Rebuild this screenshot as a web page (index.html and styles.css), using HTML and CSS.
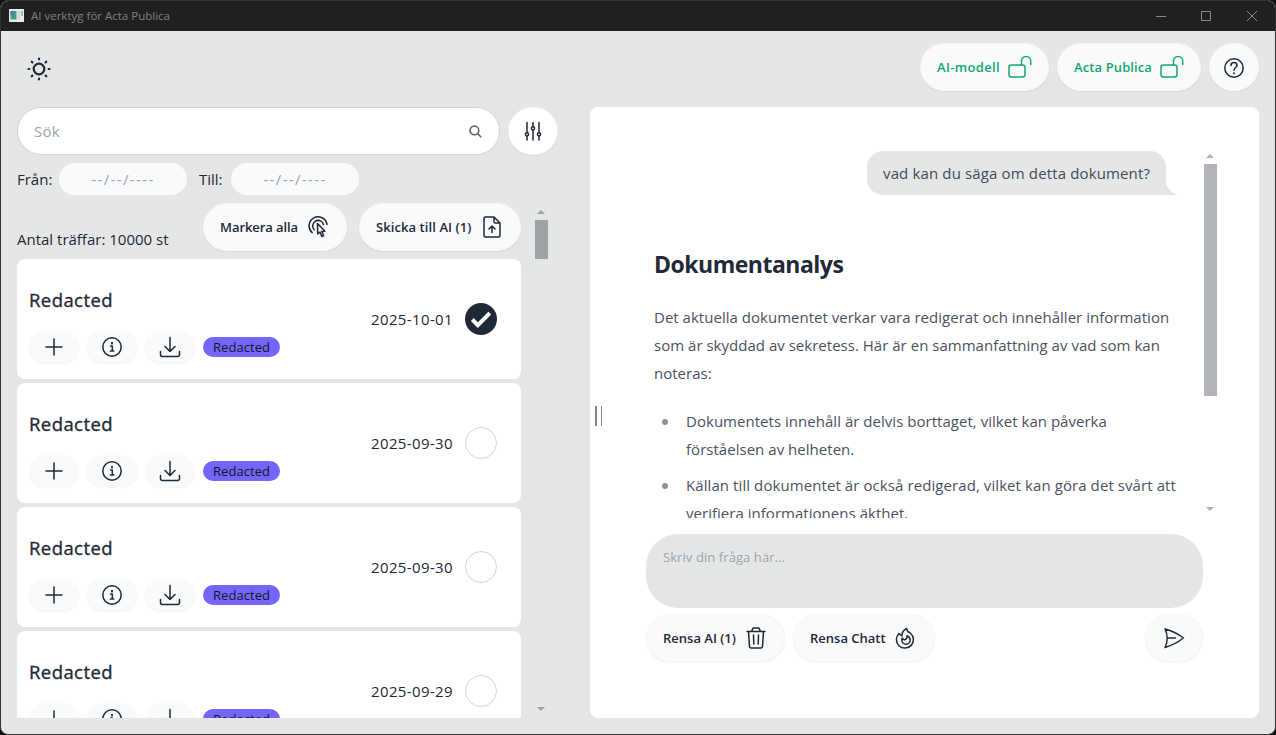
FILE: index.html
```
<!DOCTYPE html>
<html lang="sv">
<head>
<meta charset="utf-8">
<title>AI verktyg för Acta Publica</title>
<link rel="stylesheet" href="styles.css">
</head>
<body>
<svg class="defs" width="0" height="0">
  <symbol id="i-plus" viewBox="0 0 24 24"><path d="M12 4v16M4 12h16"/></symbol>
  <symbol id="i-info" viewBox="0 0 24 24"><circle cx="12" cy="12" r="9.2"/><path d="M10.6 11h1.7v5M10.4 16h3.4" /><path d="M12 7.600v1.100" stroke-width="1.8"/></symbol>
  <symbol id="i-down" viewBox="0 0 24 24"><path d="M12 2.500v14M7 11.500l5 5 5-5M2.500 16.500v3q0 2 2 2h15q2 0 2-2v-3"/></symbol>
  <symbol id="i-lock" viewBox="0 0 24 24"><rect x="1" y="10" width="16" height="12" rx="2.500"/><path d="M13.500 10V6a4.600 4.600 0 0 1 9.200 0v3.500"/></symbol>
</svg>
<div class="window">
  <header class="titlebar">
    <svg class="app-icon" width="15" height="13" viewBox="0 0 15 13"><rect width="15" height="13" fill="#e8eaea"/><rect x="1.500" y="2" width="6" height="8.500" fill="#4c9a8e"/><rect x="1.500" y="2" width="3" height="4" fill="#497f9f"/><rect x="8.500" y="2" width="2.500" height="8.500" fill="#d3d8da"/><rect x="12" y="2" width="2" height="5" fill="#8cc2b4"/></svg>
    <span class="app-title">AI verktyg för Acta Publica</span>
    <svg class="win-controls" width="104" height="12" viewBox="0 0 104 12"><path d="M1 6.500h10M46.500 1.500h9v9h-9zM92 1l10 10M102 1L92 11"/></svg>
  </header>
  <div class="toolbar">
    <svg class="sun" width="26" height="26" viewBox="0 0 26 26"><circle cx="13" cy="13" r="5.300"/><path d="M13 2.500v.8M13 22.700v.8M2.500 13h.8M22.700 13h.8M5.700 5.700l.7.7M19.600 19.600l.7.7M5.700 20.300l.7-.7M19.600 6.400l.7-.7"/></svg>
    <button class="btn green ai"><span>AI-modell</span><svg class="ic"><use href="#i-lock"/></svg></button>
    <button class="btn green acta"><span>Acta Publica</span><svg class="ic"><use href="#i-lock"/></svg></button>
    <button class="btn round help"><svg class="ic" viewBox="0 0 24 24"><circle cx="12" cy="12" r="9.200"/><path d="M9 9.600q0-3 3-3t3 2.800c0 2.100-3 2.200-3 4.800v.1"/><path d="M12 17v.6" stroke-width="1.600"/></svg></button>
  </div>
  <main class="content">
    <section class="left">
      <div class="search-row">
        <div class="search"><span>Sök</span><svg width="13" height="13" viewBox="0 0 14 14"><circle cx="5.800" cy="5.800" r="4.700"/><path d="M9.200 9.200l4 4"/></svg></div>
        <button class="btn round white"><svg class="ic" viewBox="0 0 24 24"><path d="M6 3.500v10M6 17v4M12 3.500v4M12 11v10M18 3.500v10M18 17v4"/><circle cx="6" cy="15.300" r="1.600"/><circle cx="12" cy="9.300" r="1.600"/><circle cx="18" cy="15.300" r="1.600"/></svg></button>
      </div>
      <div class="date-row">
        <label class="from">Från:</label><span class="date-input">--/--/----</span>
        <label class="to">Till:</label><span class="date-input">--/--/----</span>
      </div>
      <div class="scroll-row">
        <div class="results">
          <div class="actions">
            <span class="count">Antal träffar: 10000 st</span>
            <button class="btn mark"><span>Markera alla</span><svg class="ic" viewBox="0 0 24 24"><path d="M6.200 17.600A9 9 0 1 1 21 9.500M8.200 14.700A5.500 5.500 0 1 1 17.500 9.500M11.500 8.500l.2 10.500 2.300-2 1.800 4.500 1.800-.8-1.700-4.200 3-.2z"/></svg></button>
            <button class="btn send-ai"><span>Skicka till AI (1)</span><svg class="ic" viewBox="0 0 24 24"><path d="M14 2H5.500Q4 2 4 3.500v17Q4 22 5.500 22h13q1.500 0 1.500-1.500V8zM14 2v4.500Q14 8 15.500 8H20M12 17.500v-6M9 14l3-3 3 3"/></svg></button>
          </div>
          <article class="card"><div class="info"><h3>Redacted</h3><div class="tools"><button class="tool"><svg class="ic"><use href="#i-plus"/></svg></button><button class="tool"><svg class="ic"><use href="#i-info"/></svg></button><button class="tool"><svg class="ic"><use href="#i-down"/></svg></button><span class="badge">Redacted</span></div></div><time>2025-10-01</time><span class="check on"><svg width="32" height="32" viewBox="0 0 32 32"><path d="M7.300 16.500l5.600 5.600L24.800 10.200"/></svg></span></article>
          <article class="card"><div class="info"><h3>Redacted</h3><div class="tools"><button class="tool"><svg class="ic"><use href="#i-plus"/></svg></button><button class="tool"><svg class="ic"><use href="#i-info"/></svg></button><button class="tool"><svg class="ic"><use href="#i-down"/></svg></button><span class="badge">Redacted</span></div></div><time>2025-09-30</time><span class="check"></span></article>
          <article class="card"><div class="info"><h3>Redacted</h3><div class="tools"><button class="tool"><svg class="ic"><use href="#i-plus"/></svg></button><button class="tool"><svg class="ic"><use href="#i-info"/></svg></button><button class="tool"><svg class="ic"><use href="#i-down"/></svg></button><span class="badge">Redacted</span></div></div><time>2025-09-30</time><span class="check"></span></article>
          <article class="card"><div class="info"><h3>Redacted</h3><div class="tools"><button class="tool"><svg class="ic"><use href="#i-plus"/></svg></button><button class="tool"><svg class="ic"><use href="#i-info"/></svg></button><button class="tool"><svg class="ic"><use href="#i-down"/></svg></button><span class="badge">Redacted</span></div></div><time>2025-09-29</time><span class="check"></span></article>
        </div>
        <div class="bar list-bar"><i class="up"></i><i class="thumb"></i><i class="down"></i></div>
      </div>
    </section>
    <section class="chat">
      <div class="grip"><i></i><i></i></div>
      <div class="chat-body">
        <div class="log-row">
          <div class="log">
            <div class="bubble">vad kan du säga om detta dokument?<svg class="tail" width="12" height="11" viewBox="0 0 12 11"><path d="M0 0Q4 9 12 11H0z"/></svg></div>
            <h2>Dokumentanalys</h2>
            <p>Det aktuella dokumentet verkar vara redigerat och innehåller information<br>som är skyddad av sekretess. Här är en sammanfattning av vad som kan<br>noteras:</p>
            <ul>
              <li>Dokumentets innehåll är delvis borttaget, vilket kan påverka<br>förståelsen av helheten.</li>
              <li><span class="wide">Källan till dokumentet är också redigerad, vilket kan göra det svårt att</span><br>verifiera informationens äkthet.</li>
            </ul>
          </div>
          <div class="bar chat-bar"><i class="up"></i><i class="thumb"></i><i class="down"></i></div>
        </div>
        <div class="prompt">Skriv din fråga här...</div>
        <div class="chat-actions">
          <button class="btn clear-ai"><span>Rensa AI (1)</span><svg class="ic" viewBox="0 0 24 24"><path d="M3 5.500h18M4.500 5.500l1 15q.1 1.500 1.600 1.500h9.800q1.500 0 1.600-1.500l1-15M8 5.500q0-3.500 2-3.500h4q2 0 2 3.500M9.500 9l.3 9M14.500 9l-.3 9"/></svg></button>
          <button class="btn clear-chat"><span>Rensa Chatt</span><svg class="ic" viewBox="0 0 24 24"><path d="M12.500 2.300Q13 5.500 16.500 7.200A8.500 8.500 0 1 1 5 7.500L8 10Q7.500 5.500 12.500 2.300z"/><path d="M13 9.800Q16.200 11 16.200 14a4.200 4.200 0 1 1-8.400 0q0-1 .5-1.800 1.400 2 3 1.300 2-1 1.700-3.700z"/></svg></button>
          <button class="btn send"><svg class="ic" viewBox="0 0 24 24"><path d="M3 3Q13 5.500 21.500 12 13 18.500 3 21.500 7.500 12 3 3zM5.500 12h8"/></svg></button>
        </div>
      </div>
    </section>
  </main>
</div>
</body>
</html>
```
FILE: styles.css
```
* { box-sizing: border-box; }
body { margin: 0; background: #111; font-family: "Open Sans", "Noto Sans", sans-serif; font-size: 15px; color: #1f2937; }
.defs { position: absolute; }
.window { width: 1276px; height: 735px; border: 1px solid #333; border-radius: 8px; background: #e5e7e6; overflow: hidden; display: flex; flex-direction: column; }
.titlebar { height: 30px; flex: none; background: #202020; display: flex; align-items: center; padding: 0 16px 1px 8px; color: #808080; font-size: 11.5px; }
.app-title { margin-left: 7px; flex: none; }
.win-controls { margin-left: auto; fill: none; stroke: #8a8a8a; }
.toolbar { height: 76px; flex: none; display: flex; align-items: flex-start; gap: 8px; padding: 12px 16px 0 25px; }
.sun { margin: 13px auto 0 0; fill: none; stroke: #1f2937; stroke-width: 2.2; stroke-linecap: round; }
.ic { width: 24px; height: 24px; fill: none; stroke: currentColor; stroke-width: 1.5; stroke-linecap: round; stroke-linejoin: round; flex: none; }
.btn { height: 48px; border: 1px solid #f5f6f8; border-radius: 24px; background: #f9fafc; box-shadow: 0 1px 2px rgba(0,0,0,.05); color: #1f2937; font: 600 13px "Open Sans", sans-serif; display: flex; align-items: center; justify-content: space-between; padding: 0 16px; white-space: nowrap; flex: none; }
.green { color: #10a870; }
.ai { width: 129px; letter-spacing: .34px; }
.acta { width: 144px; letter-spacing: .11px; }
.round { width: 50px; padding: 0; justify-content: center; }
.help { padding-top: 1px; }
.white { background: #fff; }
.content { flex: 1; display: flex; min-height: 0; padding: 0 16px 16px; }
.left { width: 541px; display: flex; flex-direction: column; gap: 8px; }
.search-row { display: flex; gap: 8px; }
.search { width: 483px; height: 48px; border: 1px solid #d2d4d4; border-radius: 24px; background: #fff; display: flex; align-items: center; justify-content: space-between; padding: 0 17px 0 16px; color: #9ca3af; letter-spacing: .3px; }
.search svg { fill: none; stroke: #5d646f; stroke-width: 1.7; }
.date-row { height: 32px; display: flex; align-items: center; gap: 8px; white-space: nowrap; }
.from { width: 34px; }
.to { width: 24px; margin-left: 4px; }
.date-input { width: 128px; height: 32px; border-radius: 16px; background: #f9fafc; color: #9ca3af; display: flex; align-items: center; justify-content: center; letter-spacing: 1.35px; }
.scroll-row { flex: 1; min-height: 0; display: flex; gap: 14px; }
.results { width: 504px; overflow: hidden; display: flex; flex-direction: column; gap: 4px; }
.actions { height: 52px; flex: none; display: flex; gap: 12px; }
.count { width: 174px; height: 46px; display: flex; align-items: flex-end; white-space: nowrap; }
.mark { width: 144px; letter-spacing: -.07px; }
.send-ai { width: 162px; letter-spacing: .08px; }
.card { height: 120px; flex: none; background: #fff; border-radius: 8px; padding: 27px 24px 0 12px; display: flex; align-items: flex-start; }
.info { flex: 1; }
h3 { margin: 0; font-size: 18.5px; font-weight: 400; line-height: 28px; letter-spacing: .43px; -webkit-text-stroke: .35px; }
.tools { display: flex; align-items: center; gap: 8px; margin-top: 17px; }
.tool { width: 50px; height: 32px; border: 0; border-radius: 16px; padding: 0; background: #f9fafc; box-shadow: 0 1px 2px rgba(0,0,0,.05); color: #1f2937; display: flex; align-items: center; justify-content: center; }
.badge { height: 20px; width: 77px; line-height: 20px; border-radius: 10px; background: #7566fb; color: #111827; font-size: 13px; text-align: center; letter-spacing: .05px; }
time { margin: 22px 12px 0 0; line-height: 22px; width: 82px; letter-spacing: .37px; }
.check { width: 32px; height: 32px; margin-top: 17px; border: 1px solid #d4d5d6; border-radius: 50%; }
.on { border: 0; background: #1f2937; }
.on svg { fill: none; stroke: #fff; stroke-width: 4; display: block; }
.bar { display: flex; flex-direction: column; align-items: flex-start; width: 13px; color: #9da2a5; }
.up, .down { margin-left: 2px; border: 4px solid transparent; }
.up { border-top: 0; border-bottom-color: currentColor; }
.down { border-bottom: 0; border-top-color: currentColor; margin-top: auto; }
.thumb { width: 13px; background: currentColor; margin-top: 6px; }
.list-bar { padding: 7px 0; }
.list-bar .thumb { height: 39px; }
.chat { margin-left: 32px; width: 669px; background: #fff; border-radius: 8px; display: flex; padding: 44px 41px 0 4px; }
.grip { width: 8px; height: 20px; margin-top: 255px; display: flex; gap: 4px; padding-left: 1px; }
.grip i { width: 1.5px; background: #7d8596; }
.chat-body { margin-left: 44px; display: flex; flex-direction: column; width: 572px; }
.log-row { height: 367px; display: flex; }
.log { width: 558px; padding-left: 8px; overflow: hidden; color: #4b5260; line-height: 28px; white-space: nowrap; }
.bubble { position: relative; width: 299px; height: 44px; line-height: 44px; margin-left: 213px; padding-left: 16px; border-radius: 16px 16px 0 16px; background: #e5e7e6; color: #434a58; letter-spacing: .14px; }
.tail { position: absolute; left: 299px; bottom: 0; fill: #e5e7e6; }
h2 { margin: 53px 0 0; font-size: 23px; font-weight: 700; line-height: 32px; color: #1f2937; letter-spacing: -.5px; }
p { margin: 23px 0 0; letter-spacing: .018px; }
ul { margin: 20px 0 0; padding: 0 0 0 32px; list-style: none; }
li { margin-bottom: 8px; letter-spacing: .03px; }
.wide { letter-spacing: .083px; }
li::before { content: ""; float: left; width: 6px; height: 6px; border-radius: 50%; background: #8d9299; margin: 12px 0 0 -24px; }
.chat-bar { padding: 3px 0 7px; color: #b0b3b8; }
.chat-bar .thumb { height: 232px; }
.prompt { width: 557px; height: 74px; margin-top: 16px; border-radius: 32px; background: #e5e7e6; color: #9ca3af; font-size: 13px; line-height: 20px; padding: 13px 17px; letter-spacing: .08px; }
.chat-actions { display: flex; gap: 8px; margin-top: 6px; width: 557px; }
.clear-ai { width: 139px; }
.clear-chat { width: 142px; }
.send { width: 58px; margin-left: auto; justify-content: center; }
```
